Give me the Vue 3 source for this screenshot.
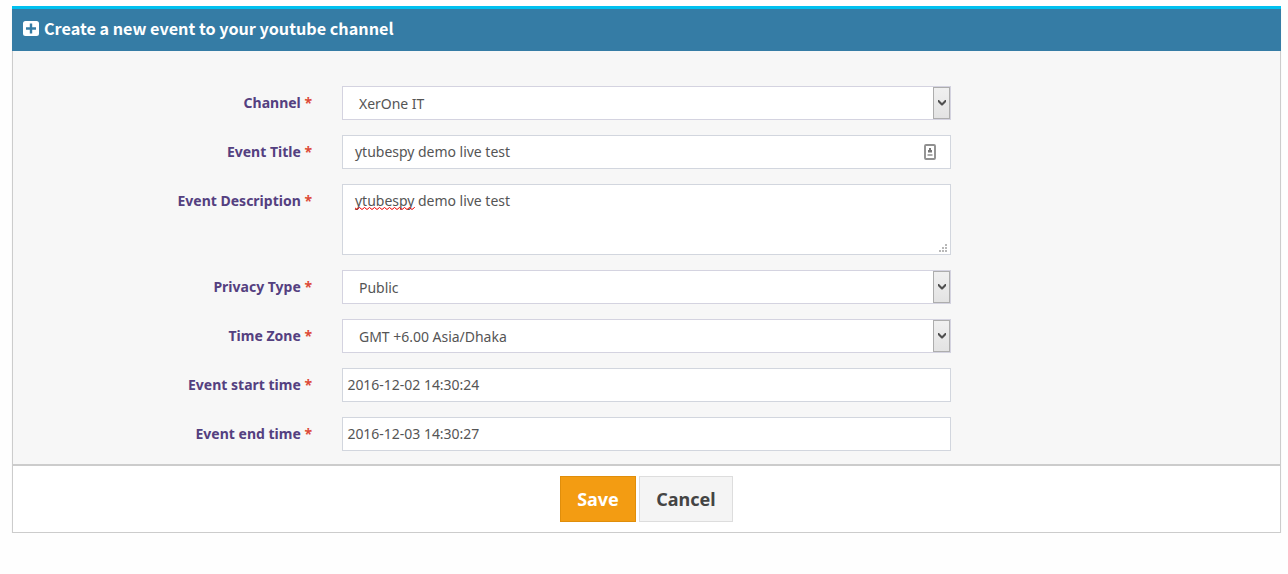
<script setup>
const fields = [
  { label: 'Channel', value: 'XerOne IT', kind: 'select' },
  { label: 'Event Title', value: 'ytubespy demo live test', kind: 'title' },
  { label: 'Event Description', value: 'ytubespy demo live test', kind: 'area' },
  { label: 'Privacy Type', value: 'Public', kind: 'select' },
  { label: 'Time Zone', value: 'GMT +6.00 Asia/Dhaka', kind: 'select' },
  { label: 'Event start time', value: '2016-12-02 14:30:24', kind: 'time' },
  { label: 'Event end time', value: '2016-12-03 14:30:27', kind: 'time' },
]
</script>

<template>
  <main class="box">
    <header class="head">
      <svg class="plus" width="16" height="15" viewBox="0 0 16 15">
        <path fill="#fff" fill-rule="evenodd" d="M2.500 0h11a2.500 2.500 0 0 1 2.500 2.500v10a2.500 2.500 0 0 1-2.500 2.500H2.500a2.500 2.500 0 0 1-2.500-2.500V2.500a2.500 2.500 0 0 1 2.500-2.500zM6.800 2.500V6.300H3v2.400h3.800v3.800h2.400V8.700H13V6.300H9.200V2.500z" />
      </svg>
      <h3 class="heading">Create a new event to your youtube channel</h3>
    </header>
    <section class="body">
      <div v-for="f in fields" :key="f.label" class="row">
        <label class="label">{{ f.label }} <span class="star">*</span></label>
        <div class="control" :class="f.kind">
          <span class="value">{{ f.value }}</span>
          <span v-if="f.kind === 'select'" class="arrow">
            <svg width="8" height="6" viewBox="0 0 8 6">
              <path fill="#505050" d="M0 0h1l3 3L7 0h1v2L4.500 5.500h-1L0 2z" />
            </svg>
          </span>
          <svg v-if="f.kind === 'title'" class="card" width="12" height="16" viewBox="0 0 12 16">
            <rect x="1" y="1" width="10" height="14" rx="1" fill="#fff" stroke="#909090" stroke-width="1.900" />
            <path fill="#777" d="M5 4h2v2h1v2.500H4V6h1z" />
            <path fill="#aaa" d="M3.500 10h5v2h-5z" />
          </svg>
          <template v-if="f.kind === 'area'">
            <svg class="squiggle" width="60" height="3" viewBox="0 0 60 3">
              <defs>
                <pattern id="wave" width="5" height="3" patternUnits="userSpaceOnUse">
                  <path d="M-.5 .5L2 2.500L4.500 .5L7 2.500" fill="none" stroke="#e00" />
                </pattern>
              </defs>
              <rect width="60" height="3" fill="url(#wave)" />
            </svg>
            <svg class="grip" width="8" height="8" viewBox="0 0 8 8" shape-rendering="crispEdges">
              <path fill="#b8b8b8" d="M6 0h2v2h-2zM3 3h2v2h-2zM6 3h2v2h-2zM0 6h2v2h-2zM3 6h2v2h-2zM6 6h2v2h-2z" />
            </svg>
          </template>
        </div>
      </div>
    </section>
    <footer class="foot">
      <button class="btn save">Save</button>
      <button class="btn cancel">Cancel</button>
    </footer>
  </main>
</template>

<style>
body { background: #fefefe; }
</style>
<style scoped>
* { box-sizing: border-box; }
.box {
  width: 1269px;
  margin: 6px 0 0 12px;
  display: flow-root;
  font: 14px/20px "Noto Sans", "Open Sans", sans-serif;
  box-shadow: 0 2px 1px rgba(0, 0, 0, .08);
}
.head {
  height: 45px;
  border-top: 3px solid #00c0ef;
  background: #357ca5;
  display: flex;
  align-items: flex-start;
  padding: 12px 0 0 11px;
}
.heading {
  margin: -5px 0 0 5px;
  font: bold 16.200px/24px "Noto Sans CJK SC", sans-serif;
  color: #fff;
  white-space: nowrap;
}
.body {
  height: 413px;
  padding-top: 35px;
  background: #f7f7f7;
  border: solid #ccc;
  border-width: 0 1px;
  display: flex;
  flex-direction: column;
  gap: 15px;
}
.row { display: flex; gap: 30px; }
.label {
  width: 299px;
  padding-top: 7px;
  text-align: right;
  font-weight: bold;
  color: #544080;
}
.star { color: #dd4b39; }
.control {
  position: relative;
  width: 609px;
  height: 34px;
  border: 1px solid #d2d6de;
  background: #fff;
  color: #555;
  padding: 6px 12px;
  white-space: nowrap;
}
.value { letter-spacing: -0.020px; }
.control.select { padding: 7px 0 0 16px; border-color: #d4d3e0; }
.control.time { padding-left: 4.400px; }
.control.area { height: 71px; }
.arrow {
  position: absolute;
  top: 0;
  right: 0;
  width: 17px;
  height: 32px;
  border: 1px solid #adadad;
  background: linear-gradient(#f0f0f0, #e3e3e3);
  display: flex;
  align-items: center;
  justify-content: center;
}
.card { position: absolute; top: 8px; right: 14px; }
.squiggle { position: absolute; left: 12px; top: 22px; }
.grip { position: absolute; right: 3px; bottom: 2px; }
.foot {
  height: 69px;
  background: #fff;
  border: 1px solid #ccc;
  border-top-width: 2px;
  display: flex;
  justify-content: center;
  gap: 3px;
  padding-top: 10px;
}
.btn {
  height: 46px;
  padding: 0;
  border: 1px solid;
  font: bold 18px/24px "Noto Sans", sans-serif;
}
.save { width: 76px; background: #f39c12; border-color: #e08e0b; color: #fff; }
.cancel { width: 94px; background: #f4f4f4; border-color: #ddd; color: #444; }
</style>
